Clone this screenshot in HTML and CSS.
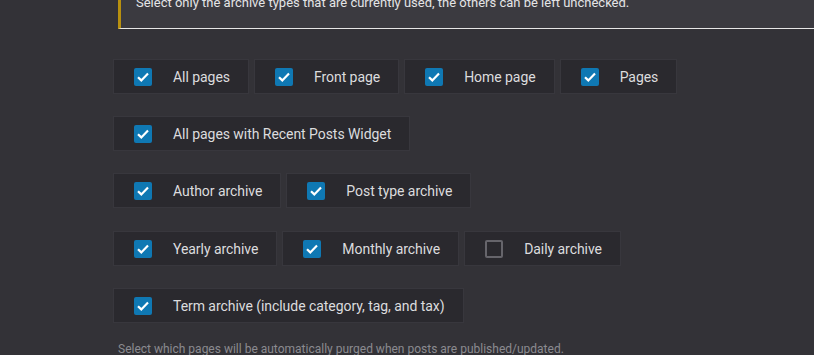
FILE: index.html
```html
<!DOCTYPE html>
<html lang="en">
<head>
  <meta charset="UTF-8">
  <meta name="viewport" content="width=device-width, initial-scale=1.0">
  <title>Purge settings</title>
  <link rel="stylesheet" href="styles.css">
</head>
<body>
  <div class="container">
    <div class="notice">Select only the archive types that are currently used, the others can be left unchecked.</div>

    <div class="row">
      <label class="option"><span class="check on"></span>All pages</label>
      <label class="option"><span class="check on"></span>Front page</label>
      <label class="option"><span class="check on"></span>Home page</label>
      <label class="option"><span class="check on"></span>Pages</label>
    </div>
    <div class="row">
      <label class="option"><span class="check on"></span>All pages with Recent Posts Widget</label>
    </div>
    <div class="row archives">
      <label class="option"><span class="check on"></span>Author archive</label>
      <label class="option"><span class="check on"></span>Post type archive</label>
    </div>
    <div class="row">
      <label class="option"><span class="check on"></span>Yearly archive</label>
      <label class="option"><span class="check on"></span>Monthly archive</label>
      <label class="option"><span class="check"></span>Daily archive</label>
    </div>
    <div class="row">
      <label class="option"><span class="check on"></span>Term archive (include category, tag, and tax)</label>
    </div>

    <p class="description">Select which pages will be automatically purged when posts are published/updated.</p>
  </div>
</body>
</html>
```

FILE: styles.css
```css
body {
  margin: 0;
  background-color: #333237;
  font-family: Roboto, 'Liberation Sans', sans-serif;
  color: #dcdcde;
  overflow: hidden;
}

.container {
  padding-left: 113px;
}

.notice {
  margin: -17px 0 0 5px;
  padding: 10px 15px 15px;
  background-color: #3b3a40;
  border-left: 3px solid #b8900f;
  border-bottom: 1px solid #e6e6e6;
  font-size: 13px;
  line-height: 20px;
  color: #e4e4e6;
  white-space: nowrap;
}

.notice + .row {
  margin-top: 30px;
}

.row {
  display: flex;
  gap: 5px;
  margin-bottom: 22px;
}

.row.archives {
  margin-bottom: 23px;
}

.option {
  display: flex;
  align-items: center;
  gap: 21px;
  height: 33px;
  padding: 0 18px 0 20px;
  background-color: #2a292e;
  border: 1px solid #38373d;
  font-size: 14px;
  letter-spacing: -0.05px;
  color: #dcdcde;
  white-space: nowrap;
}

.check {
  width: 18px;
  height: 18px;
  box-sizing: border-box;
  border: 2px solid #66656b;
  border-radius: 2px;
}

.check.on {
  border: none;
  background-color: #0f78b3;
  background-image: url("data:image/svg+xml,%3Csvg xmlns='http://www.w3.org/2000/svg' viewBox='0 0 18 18'%3E%3Cpath d='M4 9.2l3.3 3.2L14 5.6' fill='none' stroke='white' stroke-width='2.2'/%3E%3C/svg%3E");
}

.description {
  margin: -5px 0 0 5px;
  font-size: 12px;
  line-height: 18px;
  color: #8b8b90;
}
```
